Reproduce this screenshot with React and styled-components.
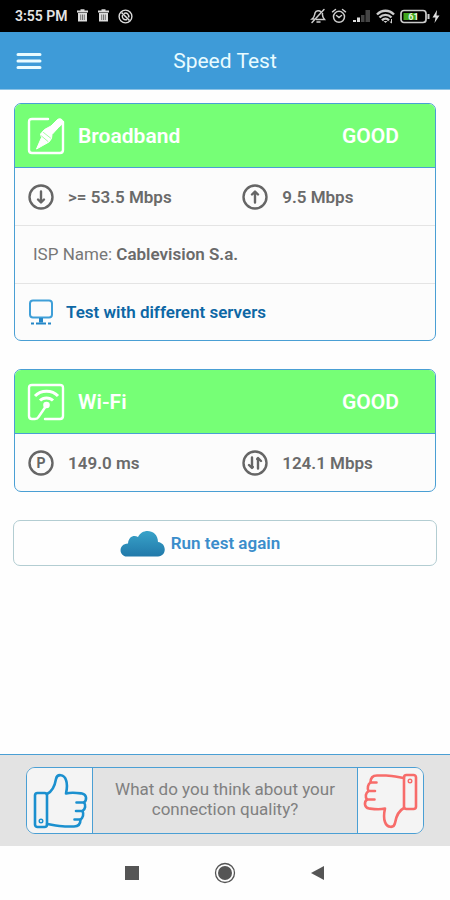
import React from 'react';
import styled, { createGlobalStyle } from 'styled-components';


const App = () => {
    return (
        <Screen>
            <GlobalStyle />
            <StatusBar>
                <StatusGroup>
                    <Clock>3:55 PM</Clock>
                    <TrashIcon />
                    <TrashIcon />
                    <BlockedIcon />
                </StatusGroup>
                <StatusGroup $tight>
                    <BellOffIcon />
                    <AlarmIcon />
                    <SignalIcon />
                    <WifiStatusIcon />
                    <BatteryIcon />
                </StatusGroup>
            </StatusBar>

            <Header>
                <MenuButton type="button" aria-label="Menu">
                    <svg width="28" height="20" viewBox="0 0 28 20" stroke="#e9fbff" strokeWidth="3" strokeLinecap="round">
                        <path d="M3 3.500H25M3 10H25M3 16.500H25" />
                    </svg>
                </MenuButton>
                <Title>Speed Test</Title>
            </Header>

            <Content>
                <Card>
                    <CardHead>
                        <BroadbandIcon />
                        <CardTitle>Broadband</CardTitle>
                        <Grade>GOOD</Grade>
                    </CardHead>
                    <Stats>
                        <Stat><DownIcon />&gt;= 53.5 Mbps</Stat>
                        <Stat><UpIcon />9.5 Mbps</Stat>
                    </Stats>
                    <Isp>ISP Name: <b>Cablevision S.a.</b></Isp>
                    <ServersLink href="#servers">
                        <MonitorIcon />
                        Test with different servers
                    </ServersLink>
                </Card>

                <Card>
                    <CardHead>
                        <WifiIcon />
                        <CardTitle>Wi-Fi</CardTitle>
                        <Grade>GOOD</Grade>
                    </CardHead>
                    <Stats>
                        <Stat><PingIcon />149.0 ms</Stat>
                        <Stat><BothWaysIcon />124.1 Mbps</Stat>
                    </Stats>
                </Card>

                <RunButton type="button">
                    <CloudIcon />
                    Run test again
                </RunButton>
            </Content>

            <Feedback>
                <Poll>
                    <Vote type="button" aria-label="Good">
                        <ThumbIcon color="#1b90cf" />
                    </Vote>
                    <Question>What do you think about your connection quality?</Question>
                    <Vote type="button" aria-label="Bad" $down>
                        <ThumbIcon color="#f76c6a" />
                    </Vote>
                </Poll>
            </Feedback>

            <NavBar>
                <NavButton type="button" aria-label="Recent apps">
                    <svg width="22" height="22" viewBox="0 0 22 22"><rect x="4" y="4" width="14" height="14" fill="#555" /></svg>
                </NavButton>
                <NavButton type="button" aria-label="Home">
                    <svg width="22" height="22" viewBox="0 0 22 22">
                        <circle cx="11" cy="11" r="9.5" fill="none" stroke="#555" strokeWidth="1.3" />
                        <circle cx="11" cy="11" r="7" fill="#555" />
                    </svg>
                </NavButton>
                <NavButton type="button" aria-label="Back">
                    <svg width="22" height="22" viewBox="0 0 22 22"><path d="M4 11L17 4V18Z" fill="#555" /></svg>
                </NavButton>
            </NavBar>
        </Screen>
    )
};

// status bar icons
const TrashIcon = () => (
    <svg width="13" height="14" viewBox="0 0 13 14">
        <path d="M1 2.5H12M4.5 1.2H8.5" stroke="#ddd" strokeWidth="1.8" />
        <path d="M2 4H11V12.5H2Z" fill="#ddd" />
        <path d="M4.7 5.5V11M6.5 5.5V11M8.3 5.5V11" stroke="#555" strokeWidth=".8" />
    </svg>
);

const BlockedIcon = () => (
    <svg width="15" height="15" viewBox="0 0 15 15" fill="none" stroke="#ddd">
        <circle cx="7.5" cy="7.5" r="6.4" strokeWidth="1.4" />
        <path d="M3.5 3.5L11.5 11.5" strokeWidth="1.6" />
        <path d="M6 4.5C9 3 11.5 6 10.5 8.5M4.5 6C3.5 9 6 11.5 9 10.5" strokeWidth="1.5" />
    </svg>
);

const BellOffIcon = () => (
    <svg width="16" height="16" viewBox="0 0 16 16" fill="none" stroke="#ccc" strokeWidth="1.5" strokeLinecap="round">
        <path d="M14 1.5L2 14.5" />
        <path d="M11 4C9.5 2.3 6 2.3 5 5C4.5 7 5 8.5 2 11H4M12.5 5.5C12 8 13 9.5 14.5 11.5H6.5M7 14H10" />
    </svg>
);

const AlarmIcon = () => (
    <svg width="16" height="16" viewBox="0 0 16 16" fill="none" stroke="#ccc" strokeWidth="1.5" strokeLinecap="round">
        <circle cx="8" cy="8.8" r="5.5" />
        <path d="M1.5 3.8L4.5 1.5M14.5 3.8L11.5 1.5M5.5 7.5L8 9.5L10.5 7.5" />
    </svg>
);

const SignalIcon = () => (
    <svg width="19" height="14" viewBox="0 0 19 14">
        <path d="M1 13V11H4V13ZM5 13V8.5H8V13Z" fill="#ddd" />
        <path d="M9 13V6H12.5V13ZM13.5 13V1H18V13Z" fill="#444" />
    </svg>
);

const WifiStatusIcon = () => (
    <svg width="19" height="15" viewBox="0 0 19 15" fill="none" stroke="#ccc" strokeWidth="2.4">
        <path d="M1 5.5C6 .5 13 .5 18 5.5M3.5 8.5C7 5 12 5 15.5 8.5M6 11.3C8 9.3 11 9.3 13 11.3" />
        <path d="M7.500 12L9.500 14L11.500 12Z" fill="#ccc" stroke="none" />
        <path d="M15.500 10V14M13.800 12.500L15.500 14" strokeWidth="1" />
    </svg>
);

const BatteryIcon = () => (
    <svg width="40" height="15" viewBox="0 0 40 15">
        <rect x="1" y="1.5" width="25" height="12" rx="3" fill="none" stroke="#ccc" strokeWidth="1.7" />
        <path d="M3.5 4H17V11H3.5Z" fill="#41a51d" />
        <path d="M27.5 5H29.5V10H27.5Z" fill="#ccc" />
        <text x="13.5" y="11" textAnchor="middle" fontFamily="Roboto, sans-serif" fontSize="9" fontWeight="700" fill="#e6f5df">61</text>
        <path d="M37 1L32.5 8.5H35.5L34.5 14L39.5 6.5H36.5Z" fill="#ddd" />
    </svg>
);

// card icons
const BroadbandIcon = () => (
    <svg width="38" height="38" viewBox="0 0 38 38" fill="none" stroke="#fff" strokeWidth="2.4" strokeLinecap="round" strokeLinejoin="round">
        <path d="M21 2H5Q2 2 2 5V33Q2 36 5 36H33Q36 36 36 33V5" />
        <path d="M36 6C36.500 2 32.500 .5 30 3L24 9L17.500 12.5L13.500 17L14.500 20.500L9.500 32L22 25L24.500 21.500L25 17.500L31 11Z" fill="#fff" strokeWidth="1" />
        <path d="M16.500 15.500L23.500 21M14.500 19L21 24.500" stroke="#76ff76" strokeWidth=".7" />
    </svg>
);

const WifiIcon = () => (
    <svg width="38" height="38" viewBox="0 0 38 38" fill="none" stroke="#fff" strokeWidth="2.4" strokeLinecap="round" strokeLinejoin="round">
        <path d="M18 36H33Q36 36 36 33V5Q36 2 33 2H5Q2 2 2 5V33Q2 36 5 36H8Q10.500 36 11.500 34L19 23" />
        <circle cx="19.500" cy="22" r="3.300" fill="#fff" stroke="none" />
        <path d="M8 13C14 6.500 25 6.500 31 13M13 17.500C16.500 14 22.500 14 26 17.500" strokeWidth="3" strokeLinecap="butt" />
    </svg>
);

const Ring = ({ children }) => (
    <svg width="26" height="26" viewBox="0 0 26 26" fill="none" stroke="#666" strokeWidth="2.4" strokeLinecap="round" strokeLinejoin="round">
        <circle cx="13" cy="13" r="11.5" />
        {children}
    </svg>
);

const DownIcon = () => <Ring><path d="M13 7.5V17.500M10 15.500L13 18.500L16 15.500" /></Ring>;
const UpIcon = () => <Ring><path d="M13 18.500V8.500M10 10.500L13 7.500L16 10.500" /></Ring>;
const BothWaysIcon = () => (
    <Ring>
        <path d="M10 7.5V17.5M7 15L10 18L10.8 17M16 18.5V8.5M15.2 9L16 8L19 11" />
    </Ring>
);
const PingIcon = () => (
    <Ring>
        <text x="13" y="18" textAnchor="middle" fontFamily="Roboto, sans-serif" fontSize="14" fontWeight="700" fill="#666" stroke="none">P</text>
    </Ring>
);

const MonitorIcon = () => (
    <svg width="26" height="26" viewBox="0 0 26 26" fill="none" stroke="#3f9fd8" strokeWidth="2">
        <rect x="2" y="1.5" width="22" height="17" rx="3" />
        <path d="M13 19V23.5" stroke="#2487c8" strokeWidth="4" />
        <path d="M3 24.5H6M8 24.5H18M20 24.5H23" stroke="#2487c8" />
    </svg>
);

const CloudIcon = () => (
    <svg width="45" height="27" viewBox="0 0 45 27">
        <defs>
            <linearGradient id="cloud" x1="0" y1="0" x2="0" y2="1">
                <stop offset="0" stopColor="#39a3c9" />
                <stop offset="1" stopColor="#2179aa" />
            </linearGradient>
        </defs>
        <path d="M7 26.500C-1.500 26-2 14 8 13.500C8.500 6.500 14 4.500 18 7C22-2.500 38 -1 38 12C47 13 47 26 38 26.500Z" fill="url(#cloud)" />
    </svg>
);

const ThumbIcon = ({ color }) => (
    <svg width="56" height="56" viewBox="0 0 56 56" fill="none" stroke={color} strokeWidth="2.6" strokeLinecap="round" strokeLinejoin="round">
        <rect x="3" y="20" width="12" height="34" rx="2.5" />
        <circle cx="9" cy="48" r="1.8" strokeWidth="1.4" />
        <path d="M15 21C21 18 23 12 24 6C25 .5 32 1 34 7C35.500 11 35 16 34 20.500C40 19 46 20 50 20.500C55 21.500 55 27 52 29.500C54 32 53.500 36 50.500 38C52 41 51 45 48.500 46.500C48.500 51 46 53.500 42 53.500H33C27 53.500 21 52 15 51" />
        <path d="M52 29.500H44.500M50.500 38H44M48.500 46.500H42.500" />
    </svg>
);

const GlobalStyle = createGlobalStyle`
    * {
        box-sizing: border-box;
    }
    body {
        margin: 0;
        background: #fefefe;
        font-family: Roboto, sans-serif;
    }
    button {
        font-family: inherit;
        padding: 0;
        cursor: pointer;
    }
    svg {
        display: block;
        flex-shrink: 0;
    }
`
const Screen = styled.div`
    display: flex;
    flex-direction: column;
    min-height: 100vh;
`
const StatusBar = styled.div`
    display: flex;
    align-items: center;
    justify-content: space-between;
    height: 32px;
    padding: 0 10px 0 15px;
    background: #000;
`
const StatusGroup = styled.div`
    display: flex;
    align-items: center;
    gap: ${(props) => (props.$tight ? '5px' : '8px')};
`
const Clock = styled.span`
    color: #e4e4e4;
    font-size: 14px;
    font-weight: 600;
`
const Header = styled.header`
    display: grid;
    grid-template-columns: 28px 1fr 28px;
    align-items: center;
    height: 58px;
    padding: 0 15px;
    background: #3e9bd8;
    border-bottom: 1px solid #8dc3e6;
`
const MenuButton = styled.button`
    border: 0;
    background: none;
`
const Title = styled.h1`
    margin: 0;
    color: #e9fbff;
    font-size: 21px;
    font-weight: 400;
    text-align: center;
`
const Content = styled.main`
    flex: 1;
    display: flex;
    flex-direction: column;
    gap: 28px;
    padding: 13px 13px 28px;
`
const Card = styled.section`
    margin: 0 1px;
    border: 1px solid #4a9fd4;
    border-radius: 7px;
    overflow: hidden;
    background: #fcfcfc;
`
const CardHead = styled.div`
    display: flex;
    align-items: center;
    gap: 13px;
    height: 64px;
    padding: 0 36px 0 12px;
    background: #76ff76;
    color: #fff;
    border-bottom: 1px solid #4a9fd4;
`
const CardTitle = styled.h2`
    flex: 1;
    margin: 0;
    font-size: 21px;
    font-weight: 600;
`
const Grade = styled.span`
    font-size: 21px;
    font-weight: 600;
`
const Stats = styled.div`
    display: grid;
    grid-template-columns: 51fr 49fr;
`
const Stat = styled.div`
    display: flex;
    align-items: center;
    gap: 14px;
    height: 57px;
    padding-left: 13px;
    color: #6a6a6a;
    font-size: 17px;
    font-weight: 600;
`
const Isp = styled.p`
    margin: 0;
    padding: 0 18px;
    border: 1px solid #e4e4e4;
    border-width: 1px 0;
    color: #777;
    font-size: 17px;
    line-height: 57px;

    b {
        color: #6a6a6a;
        font-weight: 600;
    }
`
const ServersLink = styled.a`
    display: flex;
    align-items: center;
    gap: 12px;
    height: 56px;
    padding-left: 13px;
    color: #0d67a5;
    font-size: 17px;
    font-weight: 600;
    text-decoration: none;
`
const RunButton = styled.button`
    display: flex;
    align-items: center;
    justify-content: center;
    gap: 6px;
    height: 46px;
    padding-right: 50px;
    border: 1px solid #b3cdd2;
    border-radius: 7px;
    background: #fefefe;
    color: #3a8dcb;
    font-size: 17px;
    font-weight: 600;
`
const Feedback = styled.section`
    padding: 12px 26px;
    border-top: 1px solid #4a9fd4;
    background: #e3e3e3;
`
const Poll = styled.div`
    display: flex;
    height: 67px;
    border: 1px solid #4a9fd4;
    border-radius: 9px;
    overflow: hidden;
`
const Vote = styled.button`
    display: flex;
    align-items: center;
    justify-content: center;
    width: 66px;
    border: 0 solid #4a9fd4;
    border-width: ${(props) => (props.$down ? '0 0 0 1px' : '0 1px 0 0')};
    background: #f4f4f4;

    svg {
        transform: ${(props) => (props.$down ? 'rotate(180deg)' : 'none')};
    }
`
const Question = styled.p`
    flex: 1;
    align-self: center;
    margin: 0;
    padding: 0 16px 4px;
    color: #808080;
    font-size: 17px;
    line-height: 20px;
    text-align: center;
`
const NavBar = styled.nav`
    display: flex;
    align-items: center;
    justify-content: center;
    gap: 71px;
    height: 54px;
    background: #fefefe;
`
const NavButton = styled.button`
    border: 0;
    background: none;
`
;
export default App;
